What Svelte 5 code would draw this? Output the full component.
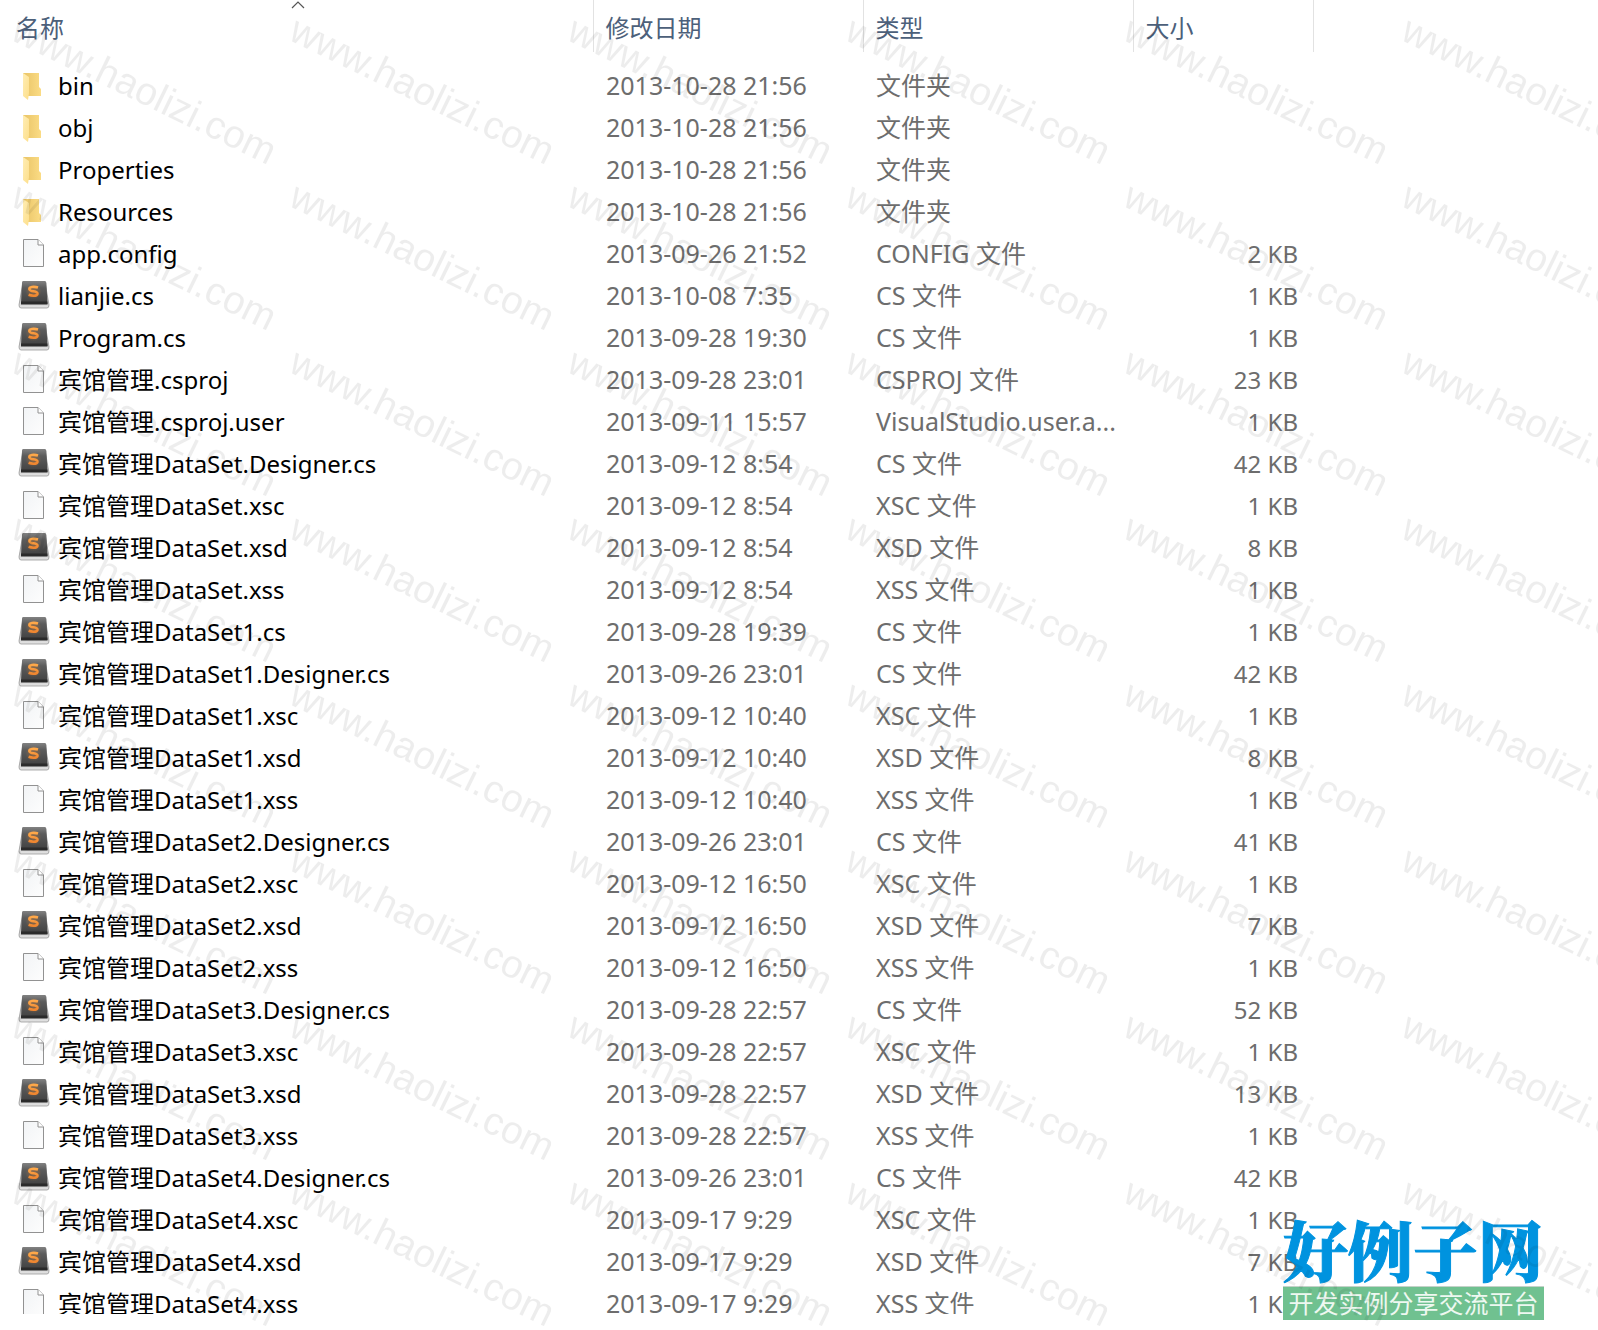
<script lang="ts">
    type Kind = 'folder' | 'file' | 'code';

    interface Entry {
        name: string;
        kind: Kind;
        modified: string;
        type: string;
        size?: string;
    }

    const entries: Entry[] = [
        { name: 'bin', kind: 'folder', modified: '2013-10-28 21:56', type: '文件夹' },
        { name: 'obj', kind: 'folder', modified: '2013-10-28 21:56', type: '文件夹' },
        { name: 'Properties', kind: 'folder', modified: '2013-10-28 21:56', type: '文件夹' },
        { name: 'Resources', kind: 'folder', modified: '2013-10-28 21:56', type: '文件夹' },
        { name: 'app.config', kind: 'file', modified: '2013-09-26 21:52', type: 'CONFIG 文件', size: '2 KB' },
        { name: 'lianjie.cs', kind: 'code', modified: '2013-10-08 7:35', type: 'CS 文件', size: '1 KB' },
        { name: 'Program.cs', kind: 'code', modified: '2013-09-28 19:30', type: 'CS 文件', size: '1 KB' },
        { name: '宾馆管理.csproj', kind: 'file', modified: '2013-09-28 23:01', type: 'CSPROJ 文件', size: '23 KB' },
        { name: '宾馆管理.csproj.user', kind: 'file', modified: '2013-09-11 15:57', type: 'VisualStudio.user.a...', size: '1 KB' },
        { name: '宾馆管理DataSet.Designer.cs', kind: 'code', modified: '2013-09-12 8:54', type: 'CS 文件', size: '42 KB' },
        { name: '宾馆管理DataSet.xsc', kind: 'file', modified: '2013-09-12 8:54', type: 'XSC 文件', size: '1 KB' },
        { name: '宾馆管理DataSet.xsd', kind: 'code', modified: '2013-09-12 8:54', type: 'XSD 文件', size: '8 KB' },
        { name: '宾馆管理DataSet.xss', kind: 'file', modified: '2013-09-12 8:54', type: 'XSS 文件', size: '1 KB' },
        { name: '宾馆管理DataSet1.cs', kind: 'code', modified: '2013-09-28 19:39', type: 'CS 文件', size: '1 KB' },
        { name: '宾馆管理DataSet1.Designer.cs', kind: 'code', modified: '2013-09-26 23:01', type: 'CS 文件', size: '42 KB' },
        { name: '宾馆管理DataSet1.xsc', kind: 'file', modified: '2013-09-12 10:40', type: 'XSC 文件', size: '1 KB' },
        { name: '宾馆管理DataSet1.xsd', kind: 'code', modified: '2013-09-12 10:40', type: 'XSD 文件', size: '8 KB' },
        { name: '宾馆管理DataSet1.xss', kind: 'file', modified: '2013-09-12 10:40', type: 'XSS 文件', size: '1 KB' },
        { name: '宾馆管理DataSet2.Designer.cs', kind: 'code', modified: '2013-09-26 23:01', type: 'CS 文件', size: '41 KB' },
        { name: '宾馆管理DataSet2.xsc', kind: 'file', modified: '2013-09-12 16:50', type: 'XSC 文件', size: '1 KB' },
        { name: '宾馆管理DataSet2.xsd', kind: 'code', modified: '2013-09-12 16:50', type: 'XSD 文件', size: '7 KB' },
        { name: '宾馆管理DataSet2.xss', kind: 'file', modified: '2013-09-12 16:50', type: 'XSS 文件', size: '1 KB' },
        { name: '宾馆管理DataSet3.Designer.cs', kind: 'code', modified: '2013-09-28 22:57', type: 'CS 文件', size: '52 KB' },
        { name: '宾馆管理DataSet3.xsc', kind: 'file', modified: '2013-09-28 22:57', type: 'XSC 文件', size: '1 KB' },
        { name: '宾馆管理DataSet3.xsd', kind: 'code', modified: '2013-09-28 22:57', type: 'XSD 文件', size: '13 KB' },
        { name: '宾馆管理DataSet3.xss', kind: 'file', modified: '2013-09-28 22:57', type: 'XSS 文件', size: '1 KB' },
        { name: '宾馆管理DataSet4.Designer.cs', kind: 'code', modified: '2013-09-26 23:01', type: 'CS 文件', size: '42 KB' },
        { name: '宾馆管理DataSet4.xsc', kind: 'file', modified: '2013-09-17 9:29', type: 'XSC 文件', size: '1 KB' },
        { name: '宾馆管理DataSet4.xsd', kind: 'code', modified: '2013-09-17 9:29', type: 'XSD 文件', size: '7 KB' },
        { name: '宾馆管理DataSet4.xss', kind: 'file', modified: '2013-09-17 9:29', type: 'XSS 文件', size: '1 KB' },
    ];
</script>

<main class="explorer">
    <!-- gradients shared by all row icons -->
    <svg class="defs" width="0" height="0" aria-hidden="true">
        <defs>
            <linearGradient id="folder-back" x1="0" x2="1" y1="0" y2="0">
                <stop offset="0.2" stop-color="#ecc86c" />
                <stop offset="1" stop-color="#fbdc85" />
            </linearGradient>
            <linearGradient id="folder-front" x1="0" x2="1" y1="0" y2="1">
                <stop offset="0" stop-color="#ffedb4" />
                <stop offset="1" stop-color="#fddf8b" />
            </linearGradient>
            <linearGradient id="page" x1="0" x2="1" y1="0" y2="1">
                <stop offset="0" stop-color="#f2f4f6" />
                <stop offset="1" stop-color="#fdfdfd" />
            </linearGradient>
            <linearGradient id="key-top" x1="0" x2="0" y1="0" y2="1">
                <stop offset="0" stop-color="#828282" />
                <stop offset="0.3" stop-color="#5c5c5c" />
                <stop offset="1" stop-color="#404040" />
            </linearGradient>
            <linearGradient id="key-side" x1="0" x2="0" y1="0" y2="1">
                <stop offset="0" stop-color="#8a8a8a" />
                <stop offset="1" stop-color="#e4e4e4" />
            </linearGradient>
            <linearGradient id="key-letter" x1="0" x2="0" y1="0" y2="1">
                <stop offset="0" stop-color="#ffa94a" />
                <stop offset="1" stop-color="#ef8630" />
            </linearGradient>
            <radialGradient id="key-glow">
                <stop offset="0" stop-color="#f08a2c" stop-opacity="0.4" />
                <stop offset="1" stop-color="#f08a2c" stop-opacity="0" />
            </radialGradient>
        </defs>
    </svg>

    <table>
        <colgroup>
            <col class="col-name" />
            <col class="col-date" />
            <col class="col-type" />
            <col class="col-size" />
            <col />
        </colgroup>
        <thead>
            <tr>
                <th aria-sort="ascending">
                    <button>名称</button>
                    <svg class="sort" width="14" height="8" viewBox="0 0 14 8" aria-hidden="true">
                        <path d="M1 7 L7 1 L13 7" fill="none" stroke="#555" stroke-width="1.2" />
                    </svg>
                </th>
                <th><button>修改日期</button></th>
                <th><button>类型</button></th>
                <th><button>大小</button></th>
                <td></td>
            </tr>
        </thead>
        <tbody>
            {#each entries as entry}
                <tr>
                    <td>
                        <div class="name">
                            <svg class="icon" width="32" height="32" viewBox="0 0 32 32" aria-hidden="true">
                                {#if entry.kind === 'folder'}
                                    <path d="M5 3 H21 V17 L23 19 V26 H5 Z" fill="url(#folder-back)" />
                                    <path d="M5 3 L11 7 V23 L10 30 L5 26 Z" fill="url(#folder-front)" />
                                {:else if entry.kind === 'file'}
                                    <path d="M5.5 1.5 H20 L25.5 7 V28.5 H5.5 Z" fill="url(#page)" stroke="#929292" />
                                    <path d="M20 1.5 V7 H25.5" fill="#fff" stroke="#929292" />
                                {:else}
                                    <path d="M5 2 H27 L31 25 Q31 28 29 28 H3 Q1 28 1 25 Z" fill="url(#key-side)" stroke="#8c8c8c" stroke-width="0.7" />
                                    <path d="M5 1 H27 Q28 1 28.4 3 L29.5 24 H3 L4 3 Q4 1 5 1 Z" fill="url(#key-top)" />
                                    <path d="M3 21.5 H29.4 L29.5 24.5 H3 Z" fill="#2b2b2b" />
                                    <circle cx="15.5" cy="11.5" r="8" fill="url(#key-glow)" />
                                    <path
                                        d="M20 7.6 Q17 6.6 14 7 Q11 7.4 11.4 9.4 Q12 11 15.5 11.3 Q19.8 12 19.5 13.8 Q19 15.7 15.5 15.7 Q13 15.7 10.6 14.8"
                                        fill="none"
                                        stroke="url(#key-letter)"
                                        stroke-width="2.6"
                                    />
                                {/if}
                            </svg>
                            <span>{entry.name}</span>
                        </div>
                    </td>
                    <td class="detail">{entry.modified}</td>
                    <td class="detail">{entry.type}</td>
                    <td class="size">{entry.size ?? ''}</td>
                    <td></td>
                </tr>
            {/each}
        </tbody>
    </table>

    <div class="brand">
        <strong>好例子网</strong>
        <span>开发实例分享交流平台</span>
    </div>

    <!-- repeated site mark over the whole listing -->
    <svg class="watermark" width="100%" height="100%" aria-hidden="true">
        <defs>
            <pattern id="mark" x="8" y="1" width="278" height="166" patternUnits="userSpaceOnUse">
                <text transform="translate(1 38) rotate(26)">www.haolizi.com</text>
            </pattern>
        </defs>
        <rect width="100%" height="100%" fill="url(#mark)" />
    </svg>
</main>

<style>
    :global(body) {
        margin: 0;
        background: #fff;
    }

    .explorer {
        position: relative;
        overflow: hidden;
        min-height: 100vh;
        box-sizing: border-box;
        font-family: 'Noto Sans', 'Noto Sans CJK SC', sans-serif;
        font-size: 24px;
        line-height: 42px;
        color: #6d6d6d;
    }

    /* white edge that cuts off the last row */
    .explorer::after {
        content: '';
        position: absolute;
        right: 0;
        bottom: 0;
        left: 0;
        height: 16px;
        background: #fff;
    }

    .defs {
        position: absolute;
    }

    table {
        width: 100%;
        table-layout: fixed;
        border-collapse: collapse;
    }

    .col-name {
        width: 593px;
    }

    .col-date,
    .col-type {
        width: 270px;
    }

    .col-size {
        width: 180px;
    }

    th {
        position: relative;
        height: 52px;
        padding: 0;
        border-right: 1px solid #e2e2e2;
        text-align: left;
    }

    th button {
        width: 100%;
        padding: 4px 0 0 12px;
        border: 0;
        background: none;
        font: inherit;
        font-weight: 400;
        line-height: 48px;
        text-align: left;
        color: #4c607a;
    }

    th:first-child button {
        padding-left: 16px;
    }

    .sort {
        position: absolute;
        top: 1px;
        right: 0;
        left: 4px;
        margin: 0 auto;
    }

    tbody::before {
        content: '';
        display: block;
        height: 13px;
    }

    tbody td {
        padding: 0 0 0 13px;
        white-space: nowrap;
    }

    tbody td:first-child {
        padding-left: 18px;
    }

    .name {
        display: flex;
        align-items: center;
        gap: 8px;
        height: 42px;
        color: #000;
    }

    .icon {
        flex-shrink: 0;
    }

    tbody .detail {
        padding-bottom: 2px;
        font-size: 25px;
        line-height: 40px;
    }

    tbody .size {
        padding: 0 15px 0 0;
        text-align: right;
    }

    .brand {
        position: absolute;
        z-index: 1;
        right: 54px;
        bottom: 10px;
        display: flex;
        flex-direction: column;
        gap: 4px;
        width: 261px;
        white-space: nowrap;
    }

    .brand strong {
        font-family: 'Noto Serif CJK SC', 'Noto Sans CJK SC', serif;
        font-size: 65px;
        font-weight: 900;
        line-height: 68px;
        color: #0093df;
        -webkit-text-stroke: 1px #0093df;
    }

    .brand span {
        border-top: 1px solid #c4d2c9;
        background: #70c190;
        font-size: 25px;
        line-height: 33px;
        text-align: center;
        color: #eef8f1;
    }

    .watermark {
        position: absolute;
        z-index: 2;
        inset: 0;
        pointer-events: none;
    }

    .watermark text {
        font-family: 'Liberation Sans', sans-serif;
        font-size: 39px;
        fill: #000;
        fill-opacity: 0.07;
    }
</style>
